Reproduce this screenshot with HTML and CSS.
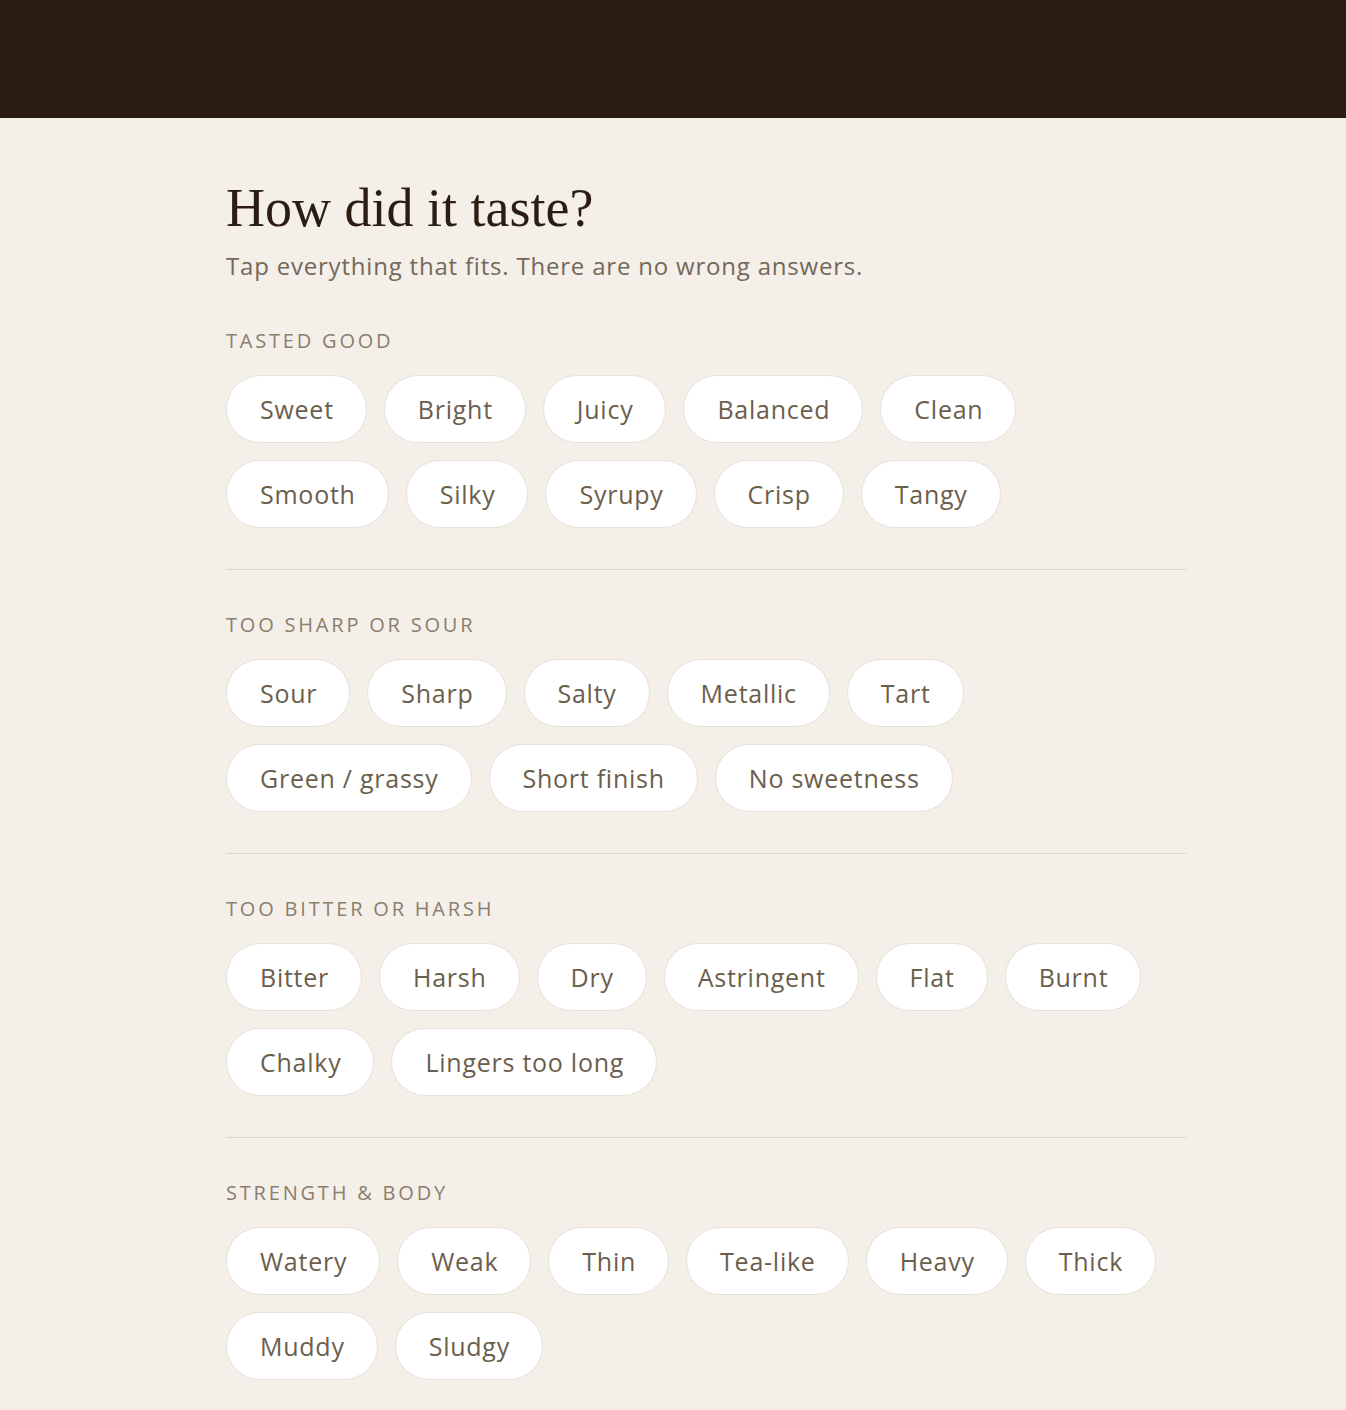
FILE: index.html
```html
<!DOCTYPE html>
<html>
<head>
<meta charset="UTF-8">
<title>How did it taste?</title>

<link rel="stylesheet" href="styles.css">

</head>
<body>

<div class="topbar"></div>

<div class="page">
	<h1 class="title">How did it taste?</h1>
	<p class="subtitle">Tap everything that fits. There are no wrong answers.</p>

	<div class="group">
		<div class="group-label">Tasted good</div>
		<div class="chips">
			<ul class="chip-row">
				<li class="chip">Sweet</li>
				<li class="chip">Bright</li>
				<li class="chip">Juicy</li>
				<li class="chip">Balanced</li>
				<li class="chip">Clean</li>
			</ul>
			<ul class="chip-row">
				<li class="chip">Smooth</li>
				<li class="chip">Silky</li>
				<li class="chip">Syrupy</li>
				<li class="chip">Crisp</li>
				<li class="chip">Tangy</li>
			</ul>
		</div>
	</div>

	<div class="group">
		<div class="group-label">Too sharp or sour</div>
		<div class="chips">
			<ul class="chip-row">
				<li class="chip">Sour</li>
				<li class="chip">Sharp</li>
				<li class="chip">Salty</li>
				<li class="chip">Metallic</li>
				<li class="chip">Tart</li>
			</ul>
			<ul class="chip-row">
				<li class="chip">Green / grassy</li>
				<li class="chip">Short finish</li>
				<li class="chip">No sweetness</li>
			</ul>
		</div>
	</div>

	<div class="group">
		<div class="group-label">Too bitter or harsh</div>
		<div class="chips">
			<ul class="chip-row">
				<li class="chip">Bitter</li>
				<li class="chip">Harsh</li>
				<li class="chip">Dry</li>
				<li class="chip">Astringent</li>
				<li class="chip">Flat</li>
				<li class="chip">Burnt</li>
			</ul>
			<ul class="chip-row">
				<li class="chip">Chalky</li>
				<li class="chip">Lingers too long</li>
			</ul>
		</div>
	</div>

	<div class="group last">
		<div class="group-label">Strength &amp; body</div>
		<div class="chips">
			<ul class="chip-row">
				<li class="chip">Watery</li>
				<li class="chip">Weak</li>
				<li class="chip">Thin</li>
				<li class="chip">Tea-like</li>
				<li class="chip">Heavy</li>
				<li class="chip">Thick</li>
			</ul>
			<ul class="chip-row">
				<li class="chip">Muddy</li>
				<li class="chip">Sludgy</li>
			</ul>
		</div>
	</div>
</div>

</body>
</html>
```

FILE: styles.css
```css
body {
	margin: 0;
	background: #f4efe9;
	font-family: "Open Sans", "Noto Sans", sans-serif;
	color: #6c5e4e;
}

.topbar {
	height: 118px;
	background: #2b1d12;
}

.page {
	width: 960px;
	margin-left: 226px;
	padding-top: 60px;
}

.title {
	font-family: "Liberation Serif", serif;
	font-weight: normal;
	font-size: 54px;
	line-height: 60px;
	color: #2b1d12;
	margin: 0;
}

.subtitle {
	font-size: 24px;
	line-height: 32px;
	letter-spacing: 0.8px;
	margin: 12px 0 0 0;
	color: #74685a;
}

.group {
	padding: 47px 0 41px 0;
	border-bottom: 1px solid #ddd6cd;
}

.group + .group {
	padding-top: 43px;
}

.group.last {
	border-bottom: none;
}

.group-label {
	font-size: 20px;
	line-height: 24px;
	letter-spacing: 2.8px;
	text-transform: uppercase;
	color: #8a7e6d;
	margin-bottom: 22px;
}

.chips {
	display: flex;
	flex-direction: column;
	gap: 17px;
}

.chip-row {
	list-style-type: none;
	margin: 0;
	padding: 0;
	display: flex;
	gap: 17px;
}

.chip {
	height: 66px;
	line-height: 66px;
	padding: 0 32px 0 33px;
	background: #fff;
	border: 1px solid #e7e1da;
	border-radius: 34px;
	font-size: 25px;
	letter-spacing: 0.75px;
	color: #6b5e4d;
}
```
